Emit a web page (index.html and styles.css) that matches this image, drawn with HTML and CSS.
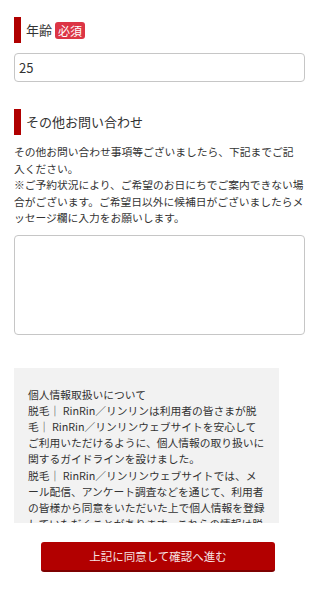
FILE: index.html
```html
<!DOCTYPE html>
<html lang="ja">
<head>
<meta charset="utf-8">
<meta name="viewport" content="width=device-width, initial-scale=1">
<link rel="stylesheet" href="styles.css">
</head>
<body>
<main class="form">
  <div class="label label-first">
    <span class="label-text">年齢</span><span class="badge">必須</span>
  </div>
  <input class="text-input" type="text" value="25">

  <div class="label label-second">
    <span class="label-text">その他お問い合わせ</span>
  </div>
  <p class="note">その他お問い合わせ事項等ございましたら、下記までご記<br>入ください。<br>※ご予約状況により、ご希望のお日にちでご案内できない場<br>合がございます。ご希望日以外に候補日がございましたらメ<br>ッセージ欄に入力をお願いします。</p>
  <textarea class="text-area"></textarea>

  <div class="privacy">
    <p class="privacy-text">個人情報取扱いについて<br>脱毛｜ RinRin／リンリンは利用者の皆さまが脱<br>毛｜ RinRin／リンリンウェブサイトを安心して<br>ご利用いただけるように、個人情報の取り扱いに<br>関するガイドラインを設けました。<br>脱毛｜ RinRin／リンリンウェブサイトでは、メ<br>ール配信、アンケート調査などを通じて、利用者<br>の皆様から同意をいただいた上で個人情報を登録<br>していただくことがあります。これらの情報は脱<br>毛｜ RinRin／リンリンウェブサイトの運営のた</p>
  </div>

  <button class="submit" type="button">上記に同意して確認へ進む</button>
</main>
</body>
</html>
```

FILE: styles.css
```css
html, body {
  margin: 0;
  padding: 0;
  background: #ffffff;
}

body {
  font-family: "Noto Sans CJK JP", "Noto Sans", sans-serif;
  color: #333333;
}

.form {
  display: flex;
  flex-direction: column;
  padding: 0 15px 0 14px;
}

.label {
  display: flex;
  align-items: center;
  height: 26px;
  border-left: 7px solid #b00000;
  padding-left: 5px;
}

.label-first {
  margin-top: 17px;
}

.label-second {
  margin-top: 27px;
}

.label-text {
  font-size: 13px;
  line-height: 18px;
  color: #333333;
}

.badge {
  margin-left: 3px;
  background: #dc3545;
  color: #ffffff;
  font-size: 12px;
  line-height: 17px;
  height: 17px;
  padding: 0 3px;
  border-radius: 3px;
}

.text-input {
  margin: 10px 0 0;
  height: 29px;
  box-sizing: border-box;
  border: 1px solid #c6c6c6;
  border-radius: 4px;
  padding: 0 4px;
  font-family: "Noto Sans CJK JP", "Noto Sans", sans-serif;
  font-size: 13px;
  color: #333333;
  background: #ffffff;
  outline: none;
}

.note {
  margin: 9px 0 0;
  font-size: 10.75px;
  line-height: 16.5px;
  color: #333333;
}

.text-area {
  margin: 8px 0 0;
  height: 100px;
  box-sizing: border-box;
  border: 1px solid #c6c6c6;
  border-radius: 4px;
  resize: none;
  background: #ffffff;
  outline: none;
}

.privacy {
  margin-top: 33px;
  width: 265px;
  height: 155px;
  box-sizing: border-box;
  overflow: hidden;
  background: #f2f2f2;
  padding: 19px 10px 0 14px;
}

.privacy-text {
  margin: 0;
  font-size: 10.75px;
  line-height: 16.2px;
  color: #333333;
  white-space: nowrap;
}

.submit {
  align-self: flex-start;
  margin: 19px 0 0 27px;
  width: 234px;
  height: 30px;
  border: none;
  border-bottom: 2px solid #7e0000;
  border-radius: 3px;
  background: #b20000;
  color: #f6e3e3;
  font-family: "Noto Sans CJK JP", "Noto Sans", sans-serif;
  font-size: 11.5px;
  padding: 0;
}
```
